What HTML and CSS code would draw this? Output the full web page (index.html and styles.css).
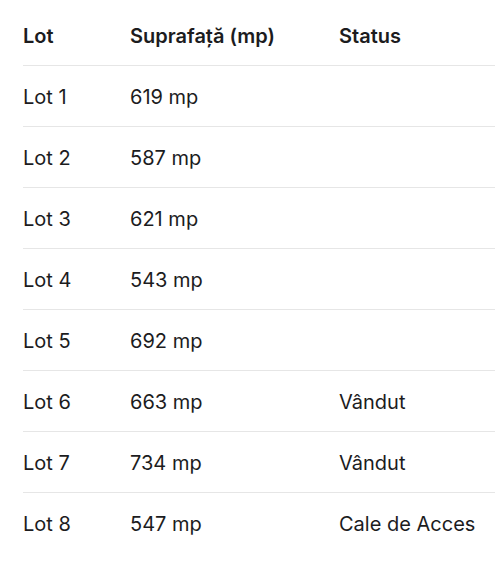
FILE: index.html
```html
<!DOCTYPE html>
<html lang="ro">
<head>
    <meta charset="UTF-8">
    <meta name="viewport" content="width=device-width, initial-scale=1.0">
    <title>Loturi</title>
    <link rel="stylesheet" href="styles.css">
</head>
<body>
    <table class="lots">
        <thead>
            <tr>
                <th class="col-lot">Lot</th>
                <th class="col-area">Suprafață (mp)</th>
                <th>Status</th>
            </tr>
        </thead>
        <tbody>
            <tr><td>Lot 1</td><td>619 mp</td><td></td></tr>
            <tr><td>Lot 2</td><td>587 mp</td><td></td></tr>
            <tr><td>Lot 3</td><td>621 mp</td><td></td></tr>
            <tr><td>Lot 4</td><td>543 mp</td><td></td></tr>
            <tr><td>Lot 5</td><td>692 mp</td><td></td></tr>
            <tr><td>Lot 6</td><td>663 mp</td><td>Vândut</td></tr>
            <tr><td>Lot 7</td><td>734 mp</td><td>Vândut</td></tr>
            <tr><td>Lot 8</td><td>547 mp</td><td>Cale de Acces</td></tr>
        </tbody>
    </table>
</body>
</html>
```

FILE: styles.css
```css
body {
    font-family: Inter, "Liberation Sans", sans-serif;
    background-color: #ffffff;
    color: #1c1c1e;
    margin: 0;
    padding: 0 0 0 23px;
    overflow: hidden;
}

.lots {
    width: 472px;
    border-collapse: collapse;
    font-size: 20px;
    table-layout: fixed;
}

.lots th {
    text-align: left;
    font-weight: 600;
    height: 58px;
    padding: 7px 0 0 0;
    vertical-align: middle;
}

.lots td {
    height: 59px;
    padding: 1px 0 0 0;
    border-top: 1px solid #e6e6e6;
    vertical-align: middle;
}

.col-lot {
    width: 107px;
}

.col-area {
    width: 209px;
}
```
